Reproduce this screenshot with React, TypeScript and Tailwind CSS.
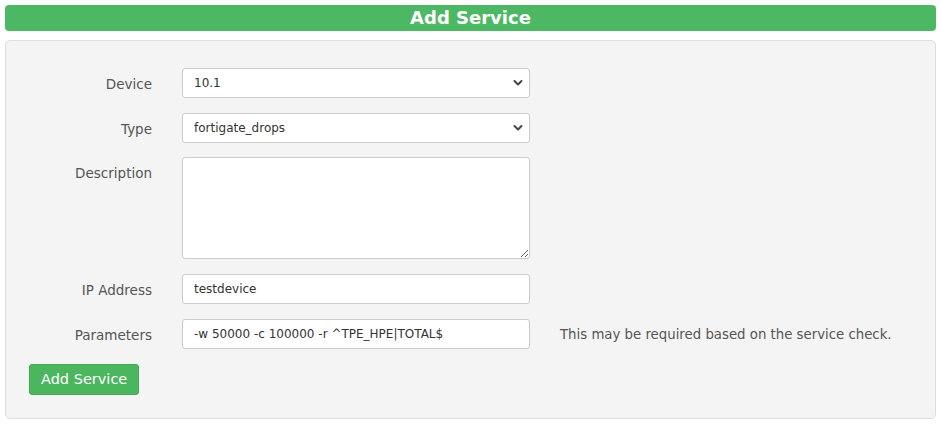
import React from 'react';

const Chevron: React.FC = () => (
  <svg
    className="pointer-events-none absolute right-[7px] top-1/2 -translate-y-1/2"
    width="10"
    height="7"
    viewBox="0 0 10 7"
    fill="none"
  >
    <path d="M1.5 1.5 L5 5 L8.5 1.5" stroke="#444" strokeWidth="2" strokeLinecap="round" strokeLinejoin="round" />
  </svg>
);

const Label: React.FC<{ children: React.ReactNode }> = ({ children }) => (
  <label className="w-[146px] shrink-0 pt-[6px] text-right text-[13.5px] leading-5 text-[#555]">{children}</label>
);

const fieldBox =
  'h-[30px] w-[348px] rounded-[3px] border border-[#ccc] bg-white px-[11px] text-[12px] text-[#333] outline-none';

export default function App() {
  return (
    <div className="min-h-screen bg-white px-[5px] pt-[5px] font-['DejaVu_Sans',Verdana,sans-serif]">
      <div className="flex h-[26px] items-center justify-center rounded-[4px] bg-[#4db863]">
        <h1 className="text-[18px] font-bold leading-none text-white">Add Service</h1>
      </div>

      <div className="mt-[9px] rounded-[5px] border border-[#dedede] bg-[#f4f4f4] pb-[23px] pl-[23px] pt-[27px]">
        <div className="-ml-[23px] flex flex-col gap-[15px]">
          <div className="flex gap-[30px]">
            <Label>Device</Label>
            <div className="relative">
              <select className={`${fieldBox} appearance-none`} defaultValue="10.1">
                <option>10.1</option>
              </select>
              <Chevron />
            </div>
          </div>

          <div className="flex gap-[30px]">
            <Label>Type</Label>
            <div className="relative">
              <select className={`${fieldBox} appearance-none`} defaultValue="fortigate_drops">
                <option>fortigate_drops</option>
              </select>
              <Chevron />
            </div>
          </div>

          <div className="-mt-px flex gap-[30px]">
            <Label>Description</Label>
            <textarea className="h-[102px] w-[348px] rounded-[3px] border border-[#ccc] bg-white px-[11px] py-[6px] text-[12px] text-[#333] outline-none" />
          </div>

          <div className="flex gap-[30px]">
            <Label>IP Address</Label>
            <input className={fieldBox} defaultValue="testdevice" />
          </div>

          <div className="flex gap-[30px]">
            <Label>Parameters</Label>
            <input className={fieldBox} defaultValue="-w 50000 -c 100000 -r ^TPE_HPE|TOTAL$" />
            <span className="pt-[6px] text-[13.3px] leading-5 text-[#555]">
              This may be required based on the service check.
            </span>
          </div>
        </div>

        <button className="mt-[15px] h-[31px] rounded-[3px] border border-[#45a857] bg-[#4cb65f] px-[11px] text-[14.5px] text-white">
          Add Service
        </button>
      </div>
    </div>
  );
}
